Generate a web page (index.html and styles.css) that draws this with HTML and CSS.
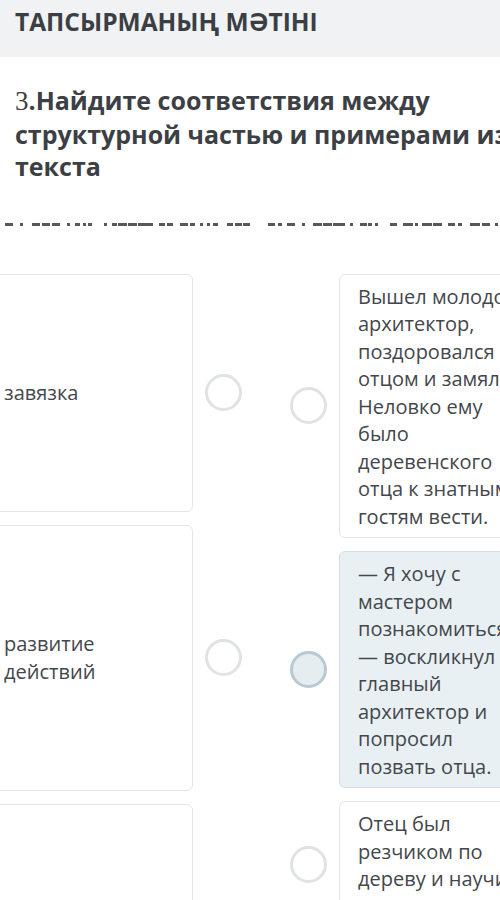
FILE: index.html
```html
<!DOCTYPE html>
<html lang="ru">
<head>
  <meta charset="UTF-8">
  <meta name="viewport" content="width=device-width, initial-scale=1.0">
  <title>Тапсырманың мәтіні</title>
  <link rel="stylesheet" href="styles.css">
</head>
<body>

  <header class="task-bar">
    <h1>ТАПСЫРМАНЫҢ МӘТІНІ</h1>
  </header>

  <main class="task">
    <h2 class="question"><span class="num">3</span>.Найдите соответствия между структурной частью и примерами из текста</h2>

    <svg class="scribble" width="500" height="4" viewBox="0 0 500 4">
      <g fill="#55595d">
        <rect x="5" y="0" width="8" height="3"/><rect x="20" y="0" width="3" height="3"/>
        <rect x="32" y="0" width="8" height="3"/><rect x="42" y="0" width="8" height="3"/>
        <rect x="52" y="0" width="8" height="3"/><rect x="67" y="0" width="3" height="3"/>
        <rect x="75" y="0" width="5" height="3"/><rect x="83" y="0" width="3" height="3"/>
        <rect x="88" y="0" width="4" height="3"/><rect x="104" y="0" width="3" height="3"/>
        <rect x="112" y="0" width="5" height="3"/><rect x="118" y="0" width="9" height="3"/>
        <rect x="128" y="0" width="9" height="3"/><rect x="138" y="0" width="15" height="3"/>
        <rect x="159" y="0" width="6" height="3"/><rect x="167" y="0" width="6" height="3"/>
        <rect x="180" y="0" width="8" height="3"/><rect x="190" y="0" width="5" height="3"/>
        <rect x="200" y="0" width="3" height="3"/><rect x="207" y="0" width="3" height="3"/>
        <rect x="213" y="0" width="5" height="3"/><rect x="227" y="0" width="6" height="3"/>
        <rect x="235" y="0" width="7" height="3"/><rect x="243" y="0" width="7" height="3"/>
        <rect x="268" y="0" width="7" height="3"/><rect x="278" y="0" width="4" height="3"/>
        <rect x="287" y="0" width="8" height="3"/><rect x="302" y="0" width="3" height="3"/>
        <rect x="313" y="0" width="9" height="3"/><rect x="323" y="0" width="9" height="3"/>
        <rect x="333" y="0" width="12" height="3"/><rect x="350" y="0" width="3" height="3"/>
        <rect x="360" y="0" width="7" height="3"/><rect x="368" y="0" width="4" height="3"/>
        <rect x="375" y="0" width="3" height="3"/><rect x="390" y="0" width="7" height="3"/>
        <rect x="403" y="0" width="10" height="3"/><rect x="415" y="0" width="3" height="3"/>
        <rect x="422" y="0" width="10" height="3"/><rect x="433" y="0" width="9" height="3"/>
        <rect x="448" y="0" width="7" height="3"/><rect x="458" y="0" width="4" height="3"/>
        <rect x="470" y="0" width="10" height="3"/><rect x="482" y="0" width="8" height="3"/>
        <rect x="495" y="0" width="3" height="3"/>
      </g>
    </svg>

    <div class="board">
      <div class="column column-left">
        <div class="pair-item">
          <div class="card card-left card-short">завязка</div>
          <span class="dot"></span>
        </div>
        <div class="pair-item">
          <div class="card card-left card-tall">развитие<br>действий</div>
          <span class="dot"></span>
        </div>
        <div class="pair-item">
          <div class="card card-left card-tall">кульминация</div>
          <span class="dot"></span>
        </div>
      </div>

      <div class="column column-right">
        <div class="pair-item">
          <span class="dot"></span>
          <div class="card card-right">Вышел молодой архитектор, поздоровался с отцом и замялся. Неловко ему было деревенского отца к знатным гостям вести.</div>
        </div>
        <div class="pair-item">
          <span class="dot dot-active"></span>
          <div class="card card-right card-active">— Я хочу с мастером познакомиться, —&nbsp;воскликнул главный архитектор и попросил позвать отца.</div>
        </div>
        <div class="pair-item">
          <span class="dot"></span>
          <div class="card card-right">Отец был резчиком по дереву и научил сына мастерству.</div>
        </div>
      </div>
    </div>
  </main>

</body>
</html>
```

FILE: styles.css
```css
body {
  font-family: "Open Sans", Arial, sans-serif;
  background: #fff;
  margin: 0;
  padding: 0;
  color: #404448;
  overflow: hidden;
}

.task-bar {
  background: #f1f2f4;
  height: 57px;
  padding: 0 15px;
}

.task-bar h1 {
  margin: 0;
  padding-top: 5px;
  font-size: 24.5px;
  line-height: 34px;
  font-weight: 700;
  color: #3b3f44;
  white-space: nowrap;
}

.question {
  margin: 27px 0 0 15px;
  width: 560px;
  font-size: 25px;
  line-height: 32.5px;
  font-weight: 700;
  color: #3c4044;
}

.question .num {
  font-family: "Liberation Serif", "Times New Roman", serif;
  font-weight: 400;
  font-size: 27px;
}

.scribble {
  display: block;
  margin-top: 40px;
}

.board {
  display: flex;
  gap: 48px;
  margin: 47px 0 0 -15px;
}

.column {
  display: flex;
  flex-direction: column;
  gap: 13px;
}

.pair-item {
  display: flex;
  align-items: center;
  gap: 12px;
}

.card {
  box-sizing: border-box;
  background: #fff;
  border: 1px solid #e3e5e7;
  border-radius: 6px;
  font-size: 20px;
  line-height: 27.5px;
  color: #43474b;
}

.card-left {
  width: 208px;
  display: flex;
  align-items: center;
  padding: 0 18px;
}

.card-short {
  height: 238px;
}

.card-tall {
  height: 266px;
}

.card-right {
  width: 210px;
  padding: 8px 18px 7px;
}

.card-active {
  background: #e9f0f4;
  border-color: #d3dee4;
}

.dot {
  flex: none;
  box-sizing: border-box;
  width: 37px;
  height: 37px;
  border: 3px solid #dfe3e6;
  border-radius: 50%;
}

.dot-active {
  background: #e5edf1;
  border-color: #b8c9d2;
}
```
